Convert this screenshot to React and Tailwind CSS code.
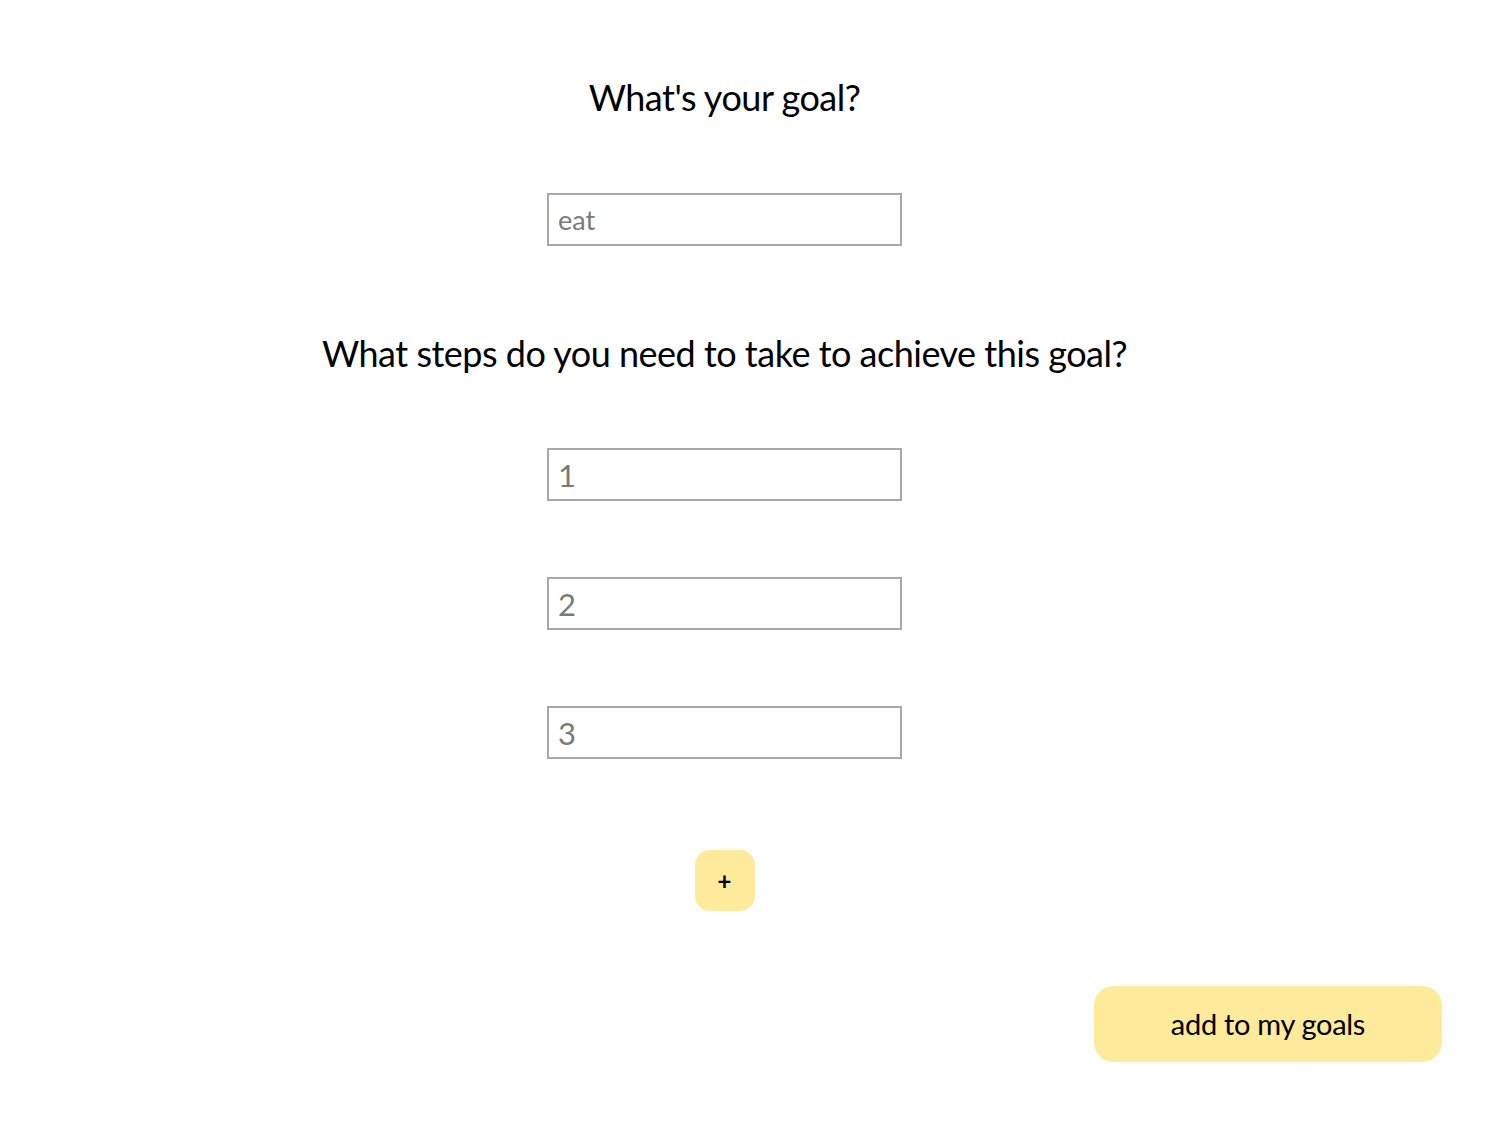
import { useState } from 'react'

/* formulario para crear una meta con sus pasos */
export default function App() {
  const [goal, setGoal] = useState('')
  const [steps, setSteps] = useState(['', '', ''])

  const handleStep = (i, value) => setSteps(steps.map((s, j) => (j === i ? value : s)))
  const addStep = () => setSteps([...steps, ''])

  const inputClass =
    'w-[355px] h-[53px] border-2 border-[#a8a8a8] bg-white px-[9px] text-black placeholder:text-[#7a7a7a] outline-none'

  return (
    <div className="min-h-[1137px] bg-white font-['Lato',sans-serif] text-black">
      <div className="flex flex-col items-center pr-[60px]">
        <h1 className="mt-[72px] text-[36px] leading-[50px] font-normal tracking-[-0.5px]">What's your goal?</h1>
        <input
          value={goal}
          onChange={(e) => setGoal(e.target.value)}
          placeholder="eat"
          className={`${inputClass} mt-[71px] text-[27px]`}
        />
        <h2 className="mt-[82px] text-[36px] leading-[50px] font-normal tracking-[-0.5px]">
          What steps do you need to take to achieve this goal?
        </h2>
        <div className="mt-[70px] flex flex-col gap-[76px]">
          {steps.map((s, i) => (
            <input
              key={i}
              value={s}
              onChange={(e) => handleStep(i, e.target.value)}
              placeholder={String(i + 1)}
              className={`${inputClass} text-[31px]`}
            />
          ))}
        </div>
        <button
          type="button"
          onClick={addStep}
          className="mt-[91px] w-[60px] h-[61px] rounded-[15px] bg-[#fdea9a] text-[24px] leading-none font-bold flex items-center justify-center"
        >
          +
        </button>
      </div>
      <div className="flex justify-end pr-[67px] mt-[75px]">
        <button
          type="button"
          className="w-[348px] h-[76px] rounded-[20px] bg-[#fdea9a] text-[29px] font-normal tracking-[-0.3px]"
        >
          add to my goals
        </button>
      </div>
    </div>
  )
}
